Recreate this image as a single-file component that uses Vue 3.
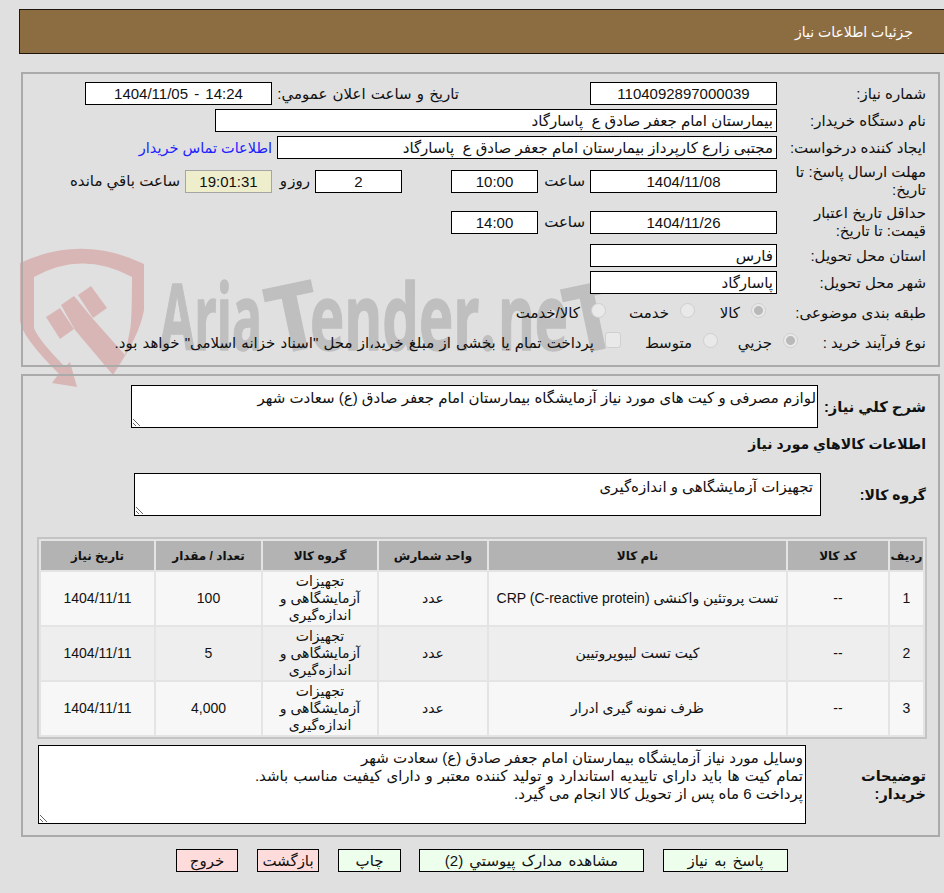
<script setup>
const rows = [
  { id: 1, name: 'تست پروتئین واکنشی CRP (C-reactive protein)', qty: '100' },
  { id: 2, name: 'کیت تست لیپوپروتیین', qty: '5' },
  { id: 3, name: 'ظرف نمونه گیری ادرار', qty: '4,000' },
]
const notes = [
  'وسایل مورد نیاز آزمایشگاه بیمارستان امام جعفر صادق (ع) سعادت شهر',
  'تمام کیت ها باید دارای تاییدیه استاندارد و تولید کننده معتبر و دارای کیفیت مناسب باشد.',
  'پرداخت 6 ماه پس از تحویل کالا انجام می گیرد.',
]
</script>

<template>
  <div class="page" dir="rtl">
    <svg class="watermark" width="944" height="893" viewBox="0 0 944 893" aria-hidden="true">
      <g fill="#d9b6b6">
        <path d="M20 263 Q82 234 144 264 L144 310 Q140 335 113 375 L125 355 L130 330 Q132 320 132 277 Q82 250 34 277 L34 328 Q38 340 70 372 L60 375 Q20 335 20 320 Z" />
        <path d="M70 362 L77 387 L52 383 L60 372 Z" />
        <path d="M46 317 L60 308 L74 329 L60 339 Z" />
        <path d="M61 305 L74 296 L93 319 L125 355 L113 375 L75 330 Z" />
        <path d="M78 295 L91 286 L107 308 L93 318 Z" />
      </g>
      <g class="wm-text" fill="#bfbfbf" stroke="#bfbfbf">
        <text x="160" y="350" textLength="102" lengthAdjust="spacingAndGlyphs">Aria</text>
        <text x="268" y="350" textLength="52" lengthAdjust="spacingAndGlyphs" transform="rotate(-12 294 320)">T</text>
        <text x="310" y="350" textLength="186" lengthAdjust="spacingAndGlyphs">ender.</text>
        <text x="498" y="350" textLength="70" lengthAdjust="spacingAndGlyphs">ne</text>
        <text x="566" y="350" textLength="52" lengthAdjust="spacingAndGlyphs" transform="rotate(-12 592 320)">T</text>
      </g>
    </svg>

    <header class="title-bar">جزئیات اطلاعات نیاز</header>

    <section class="panel info">
      <div class="row">
        <label class="lbl">شماره نیاز:</label>
        <div class="field center w187" dir="ltr">1104092897000039</div>
        <label class="lbl-second">تاریخ و ساعت اعلان عمومي:</label>
        <div class="field center w187 stamp" dir="ltr">1404/11/05 - 14:24</div>
      </div>
      <div class="row">
        <label class="lbl">نام دستگاه خریدار:</label>
        <div class="field w562">بیمارستان امام جعفر صادق ع&#160; پاسارگاد</div>
      </div>
      <div class="row">
        <label class="lbl">ایجاد کننده درخواست:</label>
        <div class="field w500">مجتبی زارع کارپرداز بیمارستان امام جعفر صادق ع&#160; پاسارگاد</div>
        <a class="contact">اطلاعات تماس خریدار</a>
      </div>
      <div class="row tall first-tall">
        <label class="lbl">مهلت ارسال پاسخ: تا تاریخ:</label>
        <div class="field center w187">1404/11/08</div>
        <span class="txt hour">ساعت</span>
        <div class="field center w87">10:00</div>
        <div class="field center w87 days">2</div>
        <span class="txt day">روز و</span>
        <div class="timer">19:01:31</div>
        <span class="txt">ساعت باقي مانده</span>
      </div>
      <div class="row tall second-tall">
        <label class="lbl">حداقل تاریخ اعتبار قیمت: تا تاریخ:</label>
        <div class="field center w187">1404/11/26</div>
        <span class="txt hour">ساعت</span>
        <div class="field center w87">14:00</div>
      </div>
      <div class="row province">
        <label class="lbl">استان محل تحویل:</label>
        <div class="field w187">فارس</div>
      </div>
      <div class="row">
        <label class="lbl">شهر محل تحویل:</label>
        <div class="field w187">پاسارگاد</div>
      </div>
      <div class="row options subject">
        <label class="lbl">طبقه بندی موضوعی:</label>
        <input class="radio r1" type="radio" name="subject" checked disabled />
        <span class="opt o1">کالا</span>
        <input class="radio r2" type="radio" name="subject" disabled />
        <span class="opt o2">خدمت</span>
        <input class="radio r3" type="radio" name="subject" disabled />
        <span class="opt">کالا/خدمت</span>
      </div>
      <div class="row options process">
        <label class="lbl">نوع فرآیند خرید :</label>
        <input class="radio r4" type="radio" name="process" checked disabled />
        <span class="opt o4">جزيي</span>
        <input class="radio r5" type="radio" name="process" disabled />
        <span class="opt o5">متوسط</span>
        <input class="check" type="checkbox" disabled />
        <span class="opt pay">پرداخت تمام یا بخشی از مبلغ خرید،از محل "اسناد خزانه اسلامی" خواهد بود.</span>
      </div>
    </section>

    <section class="panel details">
      <div class="detail-row summary">
        <h3 class="bold-lbl">شرح کلي نیاز:</h3>
        <div class="area area-summary">لوازم مصرفی و کیت های مورد نیاز آزمایشگاه بیمارستان امام جعفر صادق (ع) سعادت شهر</div>
      </div>
      <h3 class="bold-lbl section-title">اطلاعات کالاهاي مورد نیاز</h3>
      <div class="detail-row group">
        <h3 class="bold-lbl group-lbl">گروه کالا:</h3>
        <div class="area area-group">تجهیزات آزمایشگاهی و اندازه‌گیری</div>
      </div>

      <table class="items">
        <thead>
          <tr>
            <th class="c1">ردیف</th>
            <th class="c2">کد کالا</th>
            <th class="c3">نام کالا</th>
            <th class="c4">واحد شمارش</th>
            <th class="c5">گروه کالا</th>
            <th class="c6">تعداد / مقدار</th>
            <th class="c7">تاریخ نیاز</th>
          </tr>
        </thead>
        <tbody>
          <tr v-for="r in rows" :key="r.id">
            <td>{{ r.id }}</td>
            <td>--</td>
            <td>{{ r.name }}</td>
            <td>عدد</td>
            <td>تجهیزات آزمایشگاهی و اندازه‌گیری</td>
            <td>{{ r.qty }}</td>
            <td>1404/11/11</td>
          </tr>
        </tbody>
      </table>

      <div class="detail-row notes">
        <h3 class="bold-lbl notes-lbl">توضیحات خریدار:</h3>
        <div class="area area-notes">
          <div v-for="line in notes" :key="line" class="note-line">{{ line }}</div>
        </div>
      </div>
    </section>

    <footer class="actions">
      <button class="btn go b1">پاسخ به نیاز</button>
      <button class="btn go b2">مشاهده مدارک پیوستي (2)</button>
      <button class="btn go b3">چاپ</button>
      <button class="btn stop b4">بازگشت</button>
      <button class="btn stop b5">خروج</button>
    </footer>
  </div>
</template>

<style>
html, body { margin: 0; background: #e0e0e0; overflow: hidden; }
</style>

<style scoped>
.page {
  position: relative;
  width: 944px;
  height: 893px;
  overflow: hidden;
  background: #e0e0e0;
  color: #111;
  font-family: "Liberation Sans", "DejaVu Sans", sans-serif;
  font-size: 15px;
  box-sizing: border-box;
  padding-top: 9px;
}
.page * { box-sizing: border-box; }
.watermark { position: absolute; left: 0; top: 0; direction: ltr; }
.wm-text { direction: ltr; text-anchor: start; font-family: "Open Sans", sans-serif; font-weight: 700; font-size: 92px; stroke-width: 1.5; }

.title-bar {
  position: relative;
  width: 940px;
  height: 45px;
  margin-right: -15px;
  margin-left: 19px;
  padding-right: 45px;
  line-height: 44px;
  font-size: 14px;
  color: #fff;
  background: #8c6d42;
  border: 1px solid #1c160c;
}

.panel {
  position: relative;
  width: 919px;
  margin-right: 4px;
  border: 2px solid #aaa;
}
.info { margin-top: 18px; height: 295px; padding: 6px 12px 0 0; }
.details { margin-top: 7px; height: 463px; padding: 9px 12px 0 0; }

.row { display: flex; align-items: center; height: 27px; }
.tall { height: 36px; }
.first-tall { margin-top: 2px; }
.second-tall { margin-top: 5px; }
.province { margin-top: 2px; }
.options { height: 30px; }
.subject { margin-top: 2px; }
.lbl {
  width: 140px;
  margin-left: 9px;
  line-height: 18px;
  flex: none;
}
.lbl-second { margin-right: 131px; margin-left: 5px; width: 182px; flex: none; white-space: nowrap; word-spacing: 1px; }
.field {
  height: 23px;
  line-height: 21px;
  padding: 0 3px;
  background: #fff;
  border: 1px solid #000;
  white-space: nowrap;
  flex: none;
  overflow: hidden;
}
.center { text-align: center; }
.stamp { word-spacing: 2px; }
.w187 { width: 187px; }
.w562 { width: 562px; }
.w500 { width: 500px; }
.w87 { width: 87px; }
.txt { margin: 0 5px; flex: none; white-space: nowrap; }
.hour { width: 42px; }
.day { width: 33px; word-spacing: -3px; }
.days { margin-right: 49px; }
.contact { margin-right: 5px; color: #2020ff; white-space: nowrap; font-size: 14.5px; }
.timer {
  width: 87px;
  height: 23px;
  line-height: 21px;
  text-align: center;
  background: #eeeecc;
  border: 1px solid #a5a5a5;
  flex: none;
}
.radio {
  appearance: none;
  width: 15px;
  height: 15px;
  margin: -5px 0 0 0;
  flex: none;
  border-radius: 50%;
  background: #e9e9e9;
  border: 1px solid #cfcfcf;
}
.radio:checked { background: radial-gradient(circle, #b9b9b9 0 4px, #e9e9e9 5px); }
.check {
  appearance: none;
  width: 16px;
  height: 16px;
  margin: -7px 6px 0 0;
  flex: none;
  border-radius: 3px;
  background: #e9e9e9;
  border: 1px solid #cfcfcf;
}
.opt { margin-right: 11px; flex: none; white-space: nowrap; }
.pay { word-spacing: 1px; }
.r1 { margin-right: 11px; }
.o1 { width: 35px; }
.r2 { margin-right: 10px; }
.o2 { width: 57px; }
.r3 { margin-right: 6px; }
.r4 { margin-right: -21px; }
.o4 { width: 45px; }
.r5 { margin-right: 9px; }
.o5 { width: 65px; }

.detail-row { display: flex; }
.bold-lbl { margin: 0; font-size: 14px; font-weight: 700; }
.summary { height: 43px; align-items: center; }
.summary .bold-lbl { width: 108px; flex: none; font-size: 14.7px; }
.section-title { margin-top: 7px; height: 22px; line-height: 18px; }
.group { margin-top: 16px; height: 43px; align-items: center; }
.group-lbl { width: 105px; flex: none; }
.area {
  background: #fff;
  border: 1px solid #000;
  padding: 3px 4px;
  overflow: auto;
  resize: both;
  line-height: 18px;
}
.area-summary { width: 687px; height: 43px; padding-right: 1px; }
.area-group { width: 687px; height: 43px; padding-top: 4px; padding-right: 7px; }

.items {
  margin-top: 21px;
  margin-right: -1px;
  width: 887px;
  table-layout: fixed;
  border: 2px solid #c4c4c4;
  border-collapse: separate;
  border-spacing: 2px;
  background: #e4e4e4;
  font-size: 14px;
}
.items th {
  height: 29px;
  padding: 0;
  font-size: 12px;
  background: #b3b3b3;
}
.items td {
  height: 53px;
  padding: 0 4px;
  text-align: center;
  line-height: 17px;
  background: #f7f7f7;
}
.items td:nth-child(5) { padding: 0 12px; }
.items tbody tr:nth-child(even) td { background: #eee; }
.c1 { width: 33px; }
.c2 { width: 100px; }
.c3 { width: 297px; }
.c4 { width: 108px; }
.c5 { width: 114px; }
.c6 { width: 105px; }
.c7 { width: 113px; }

.notes { margin-top: 6px; align-items: center; }
.notes-lbl { width: 120px; padding-left: 32px; flex: none; line-height: 18px; font-size: 14.5px; }
.area-notes { width: 768px; height: 79px; padding: 3px 2px; }
.note-line:nth-child(2) { word-spacing: 0.9px; }

.actions { position: relative; display: flex; margin-top: 12px; padding-right: 156px; }
.btn {
  height: 23px;
  padding: 0;
  font: inherit;
  color: #111;
  border: 1px solid #000;
  flex: none;
  word-spacing: 2px;
}
.go { background: #edffec; }
.stop { background: #ffdcdc; }
.b1 { width: 125px; }
.b2 { width: 225px; margin-right: 19px; }
.b3 { width: 63px; margin-right: 18px; }
.b4 { width: 62px; margin-right: 19px; }
.b5 { width: 62px; margin-right: 19px; }
</style>
